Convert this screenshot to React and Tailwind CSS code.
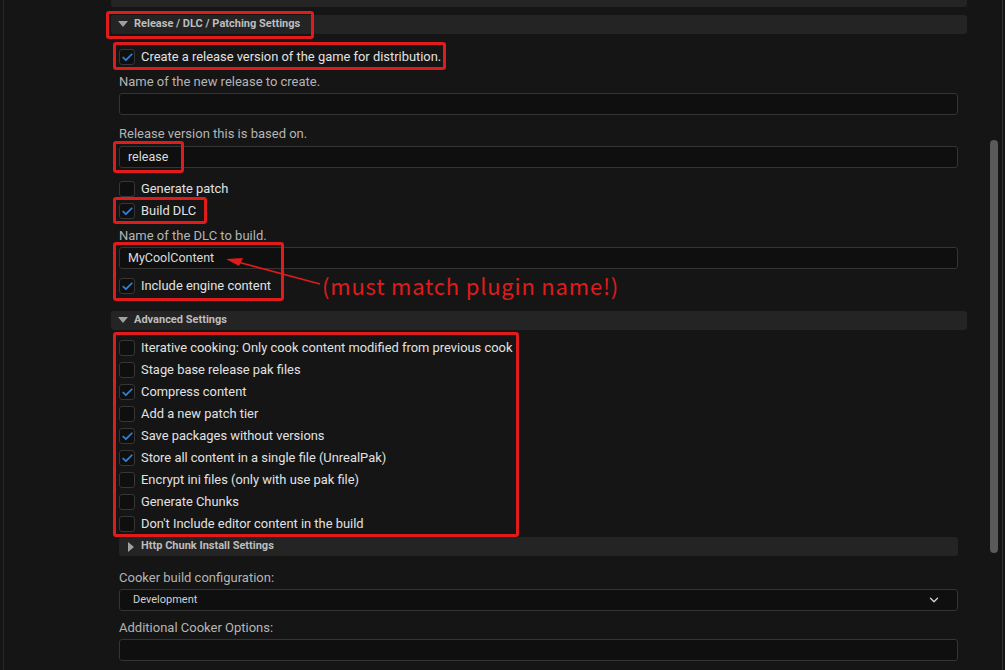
import { Check, ChevronDown } from "lucide-react";

const font = { fontFamily: "Roboto, 'Noto Sans', sans-serif" };

function Box({ checked }) {
  return (
    <div className="w-4 h-4 rounded-[3px] bg-[#0f0f0f] border border-[#363636] flex items-center justify-center shrink-0">
      {checked && <Check size={13} strokeWidth={3.2} className="text-[#2a86e0]" />}
    </div>
  );
}

function CheckRow({ checked, children }) {
  return (
    <div className="h-[22px] flex items-center gap-[6px] text-[12.9px] text-[#e2e2e2]">
      <Box checked={checked} />
      <span>{children}</span>
    </div>
  );
}

function Label({ children }) {
  return <div className="h-4 flex items-center text-[13px] text-[#b4b4b4]">{children}</div>;
}

function Input({ value }) {
  return (
    <div className="h-[22px] rounded-[3px] border border-[#343434] bg-[#0f0f0f] flex items-center px-2 text-[12.5px] text-[#dcdcdc]">
      {value}
    </div>
  );
}

function Header({ open = true, children, className = "" }) {
  return (
    <div className={"h-[19px] rounded-[3px] bg-[#242424] flex items-center gap-[6px] text-[11px] font-bold text-[#bdbdbd] " + className}>
      {open ? (
        <svg width="10" height="7" viewBox="0 0 10 7"><polygon points="0,0 10,0 5,6" fill="#a0a0a0" /></svg>
      ) : (
        <svg width="7" height="10" viewBox="0 0 7 10"><polygon points="0,0 6,5 0,10" fill="#a0a0a0" /></svg>
      )}
      <span>{children}</span>
    </div>
  );
}

function RedBox({ x, y, w, h }) {
  return (
    <div
      className="absolute border-[3px] border-[#e01b1b] rounded-[3px]"
      style={{ left: x, top: y, width: w, height: h }}
    />
  );
}

export default function App() {
  return (
    <div className="relative w-[1005px] h-[670px] overflow-hidden bg-[#151515] flex" style={font}>
      <div className="w-[4px] border-r border-[#262626] shrink-0" />
      <div className="w-[107px] shrink-0" />

      <div className="w-[856px] shrink-0 flex flex-col">
        <div className="h-[7px] bg-[#242424] rounded-b-[3px]" />
        <Header className="mt-[8px] pl-[7px]">Release / DLC / Patching Settings</Header>

        <div className="pl-[8px] pr-[9px] flex flex-col">
          <div className="mt-[12px]">
            <CheckRow checked>Create a release version of the game for distribution.</CheckRow>
          </div>
          <div className="mt-[6px]"><Label>Name of the new release to create.</Label></div>
          <div className="mt-[3px]"><Input value="" /></div>
          <div className="mt-[11px]"><Label>Release version this is based on.</Label></div>
          <div className="mt-[4px]"><Input value="release" /></div>
          <div className="mt-[10px]">
            <CheckRow>Generate patch</CheckRow>
            <CheckRow checked>Build DLC</CheckRow>
          </div>
          <div className="mt-[6px]"><Label>Name of the DLC to build.</Label></div>
          <div className="mt-[3px]"><Input value="MyCoolContent" /></div>
          <div className="mt-[6px]">
            <CheckRow checked>Include engine content</CheckRow>
          </div>
        </div>

        <Header className="mt-[14px] pl-[7px]">Advanced Settings</Header>

        <div className="pl-[8px] pr-[9px] flex flex-col">
          <div className="mt-[7px]">
            <CheckRow>Iterative cooking: Only cook content modified from previous cook</CheckRow>
            <CheckRow>Stage base release pak files</CheckRow>
            <CheckRow checked>Compress content</CheckRow>
            <CheckRow>Add a new patch tier</CheckRow>
            <CheckRow checked>Save packages without versions</CheckRow>
            <CheckRow checked>Store all content in a single file (UnrealPak)</CheckRow>
            <CheckRow>Encrypt ini files (only with use pak file)</CheckRow>
            <CheckRow>Generate Chunks</CheckRow>
            <CheckRow>Don't Include editor content in the build</CheckRow>
          </div>
          <Header open={false} className="mt-[2px] pl-[9px]">Http Chunk Install Settings</Header>
          <div className="mt-[14px]"><Label>Cooker build configuration:</Label></div>
          <div className="mt-[3px] h-[22px] rounded-[3px] border border-[#343434] bg-[#0f0f0f] flex items-center justify-between pl-[13px] pr-[16px] text-[11px] text-[#cfcfcf]">
            <span>Development</span>
            <ChevronDown size={14} strokeWidth={2.4} className="text-[#d0d0d0]" />
          </div>
          <div className="mt-[9px]"><Label>Additional Cooker Options:</Label></div>
          <div className="mt-[3px]"><Input value="" /></div>
        </div>
      </div>

      <div className="flex-1 flex">
        <div className="flex-1 pl-[23px] pt-[140px]">
          <div className="w-[8px] h-[413px] rounded-full bg-[#5a5a5a]" />
        </div>
        <div className="w-[3px] border-l border-[#333]" />
      </div>

      {/* annotations */}
      <RedBox x={106} y={11} w={208} h={28} />
      <RedBox x={113} y={42} w={333} h={28} />
      <RedBox x={113} y={141} w={71} h={32} />
      <RedBox x={113} y={197} w={94} h={27} />
      <RedBox x={113} y={242} w={171} h={59} />
      <RedBox x={113} y={332} w={406} h={205} />

      <svg className="absolute left-0 top-0" width="1005" height="670" viewBox="0 0 1005 670">
        <line x1="320" y1="284" x2="234" y2="261" stroke="#e01b1b" strokeWidth="1.6" />
        <polygon points="226,259 243,258 239,266" fill="#e01b1b" />
      </svg>
      <div
        className="absolute left-[322px] top-[270px] text-[22px] leading-[30px] text-[#e01b1b] tracking-[0.8px]"
        style={{ fontFamily: "'Noto Sans CJK KR', 'Noto Sans', sans-serif" }}
      >
        (must match plugin name!)
      </div>
    </div>
  );
}
